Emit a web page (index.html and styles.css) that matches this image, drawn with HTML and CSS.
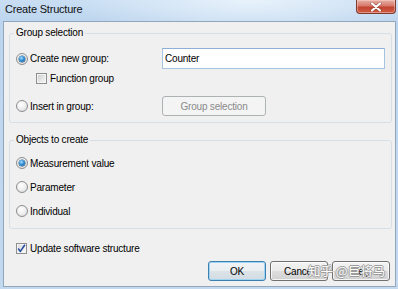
FILE: index.html
```html
<!DOCTYPE html>
<html>
<head>
<meta charset="utf-8">
<title>Create Structure</title>
<link rel="stylesheet" href="styles.css">
</head>
<body>
<div class="window">
  <div class="titlebar">
    <span class="title">Create Structure</span>
    <div class="close">
      <svg width="14" height="10" viewBox="0 0 14 10"><path d="M3 1.5 L11 8.5 M11 1.5 L3 8.5" stroke="#5a2b25" stroke-width="3.4" stroke-linecap="round" opacity="0.45"/><path d="M3 1.5 L11 8.5 M11 1.5 L3 8.5" stroke="#fff" stroke-width="2.2" stroke-linecap="round"/></svg>
    </div>
  </div>
  <div class="client">
    <fieldset class="group g1">
      <legend>Group selection</legend>
      <div class="row r-new">
        <label class="opt"><span class="radio on"></span>Create new group:</label>
        <div class="textbox">Counter</div>
      </div>
      <div class="row r-func">
        <label class="opt"><span class="check"></span>Function group</label>
      </div>
      <div class="row r-insert">
        <label class="opt"><span class="radio"></span>Insert in group:</label>
        <div class="btn wide disabled">Group selection</div>
      </div>
    </fieldset>
    <fieldset class="group g2">
      <legend>Objects to create</legend>
      <div class="row obj"><label class="opt"><span class="radio on"></span>Measurement value</label></div>
      <div class="row obj"><label class="opt"><span class="radio"></span>Parameter</label></div>
      <div class="row obj"><label class="opt"><span class="radio"></span>Individual</label></div>
    </fieldset>
    <div class="row update">
      <label class="opt"><span class="check on"><svg width="9" height="9" viewBox="0 0 9 9"><path d="M1.2 4.6 L3.4 7.4 L7.9 0.8" stroke="#2a4fa0" stroke-width="1.6" fill="none" stroke-linejoin="round"/></svg></span>Update software structure</label>
    </div>
    <div class="buttons">
      <div class="btn default">OK</div>
      <div class="btn">Cancel</div>
      <div class="btn">Help</div>
      <span class="watermark">知乎 @巨将马</span>
    </div>
  </div>
</div>
</body>
</html>
```
FILE: styles.css
```css
* { box-sizing: border-box; margin: 0; padding: 0; }
html, body { width: 398px; height: 289px; overflow: hidden; }
body {
  font-family: "Liberation Sans", Arial, sans-serif;
  font-size: 10px;
  letter-spacing: -0.2px;
  color: #000;
  background: #c4daf0;
}
.window {
  width: 398px;
  height: 289px;
  display: flex;
  flex-direction: column;
  padding: 0 2px 2px 3px;
  background:
    radial-gradient(ellipse 180px 40px at 250px 0px, rgba(235,244,252,0.9), rgba(235,244,252,0) 100%),
    linear-gradient(180deg, #c9def3 0px, #bcd5ee 22px, #c3d9f0 100%);
}
.titlebar {
  height: 21px;
  display: flex;
  justify-content: space-between;
  align-items: flex-start;
  flex: none;
}
.title {
  font-size: 11px;
  line-height: 12px;
  letter-spacing: -0.2px;
  margin: 3px 0 0 2px;
  color: #111;
}
.close {
  width: 40px;
  height: 14px;
  border: 1px solid #7e3a31;
  border-top: none;
  border-radius: 0 0 4px 4px;
  background: linear-gradient(180deg, #e7b1a6 0%, #d7786a 45%, #c24432 55%, #cf5d44 100%);
  box-shadow: inset 0 0 0 1px rgba(255,220,210,0.45);
  display: flex;
  align-items: center;
  justify-content: center;
}
.client {
  flex: 1;
  border: 1px solid #93a7bc;
  background: #f0f0f0;
  padding: 4px 3px 0 5px;
  display: flex;
  flex-direction: column;
}
.group {
  border: 1px solid #d5dfe5;
  border-radius: 3px;
  min-width: 0;
  padding: 0;
}
.group legend {
  margin-left: 4px;
  padding: 0 2px;
  line-height: 14px;
  font-size: 10px;
  color: #000;
}
.g1 { padding: 8px 0 6px 0; }
.g2 { margin-top: 10px; padding: 4px 0 5px 0; }
.row {
  display: flex;
  align-items: center;
  padding-left: 6px;
}
.opt {
  display: flex;
  align-items: center;
  gap: 2px;
  white-space: nowrap;
}
.r-new { height: 21px; }
.r-new .opt { width: 146px; }
.r-func { height: 18px; padding-left: 26px; }
.r-insert { height: 20px; margin-top: 9px; }
.r-insert .opt { width: 146px; }
.obj { height: 24px; }
.update { height: 20px; margin-top: 9px; padding-left: 7px; }

.radio {
  flex: none;
  position: relative;
  width: 12px;
  height: 12px;
  border-radius: 50%;
  border: 1px solid #8b8d90;
  background: radial-gradient(circle at 40% 35%, #ffffff 0%, #f0f0f0 45%, #d3d5d8 100%);
}
.radio.on::after {
  content: "";
  position: absolute;
  left: 2px;
  top: 2px;
  width: 6px;
  height: 6px;
  border-radius: 50%;
  background: radial-gradient(circle at 40% 35%, #a8dcff 0%, #3492d6 45%, #0d4b85 100%);
  box-shadow: 0 0 0 0.5px #27557f;
}
.check {
  flex: none;
  width: 11px;
  height: 11px;
  border: 1px solid #8e8f8f;
  background: linear-gradient(135deg, #c9ccd1 0%, #ececec 70%, #f7f7f7 100%);
  box-shadow: inset 0 0 0 1px #f4f4f4;
  display: flex;
  align-items: center;
  justify-content: center;
  margin-right: 1px;
}
.check.on { background: linear-gradient(135deg, #d5d8dc 0%, #f2f2f2 70%, #fafafa 100%); }
.check svg { display: block; }

.textbox {
  width: 223px;
  height: 21px;
  border: 1px solid #a6c3e2;
  border-top-color: #8fb0d6;
  background: #fff;
  display: flex;
  align-items: center;
  padding-left: 2px;
  font-size: 10px;
}

.btn {
  flex: none;
  width: 58px;
  height: 20px;
  border: 1px solid #707070;
  border-radius: 3px;
  background: linear-gradient(180deg, #f3f3f3 0%, #ebebeb 48%, #dddddd 52%, #d0d0d0 100%);
  box-shadow: inset 0 0 0 1px rgba(255,255,255,0.75);
  display: flex;
  align-items: center;
  justify-content: center;
  white-space: nowrap;
}
.btn.wide { width: 104px; }
.btn.disabled {
  border-color: #adb2b5;
  background: #f4f4f4;
  box-shadow: none;
  color: #8a8a8a;
}
.btn.default {
  border-color: #3c7fb1;
  background: linear-gradient(180deg, #f1f4f6 0%, #e9eef1 48%, #dbe3e8 52%, #d2dce2 100%);
  box-shadow: inset 0 0 0 1px #9fd5f3;
}
.buttons {
  position: relative;
  display: flex;
  justify-content: flex-end;
  gap: 4px;
  margin-top: 3px;
  padding-right: 2px;
}
.watermark {
  position: absolute;
  left: 299px;
  top: 2px;
  font-family: "Noto Sans CJK SC", sans-serif;
  font-size: 12.5px;
  line-height: 16px;
  letter-spacing: 0;
  color: #fbfbfb;
  text-shadow: 1px 0 0 #9c9c9c, -1px 0 0 #9c9c9c, 0 1px 0 #9c9c9c, 0 -1px 0 #9c9c9c;
  white-space: nowrap;
}
```
